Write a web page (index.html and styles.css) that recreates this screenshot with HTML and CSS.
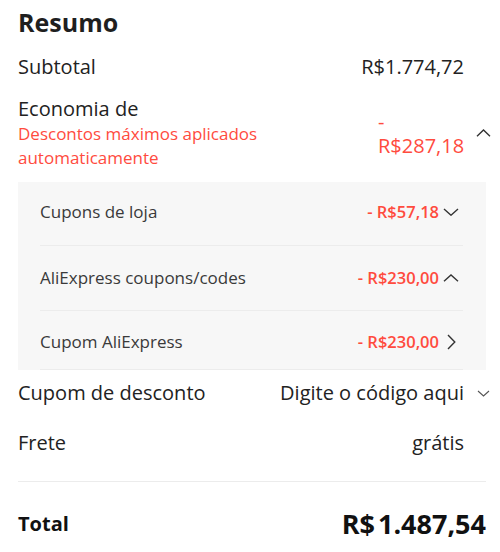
FILE: index.html
```html
<!DOCTYPE html>
<html lang="pt-BR">
<head>
<meta charset="utf-8">
<title>Resumo</title>
<link rel="stylesheet" href="styles.css">
</head>
<body>
<section class="summary">
  <h2 class="title">Resumo</h2>

  <div class="row">
    <span class="label">Subtotal</span>
    <span class="value">R$1.774,72</span>
    <span class="chev-slot"></span>
  </div>

  <div class="row savings">
    <div class="label-block">
      <span class="label">Economia de</span>
      <span class="note">Descontos máximos aplicados automaticamente</span>
    </div>
    <span class="value red savings-value">- R$287,18</span>
    <span class="chev-slot">
      <svg class="chev" width="15" height="8" viewBox="0 0 15 8"><polyline points="1,7.2 7.5,1 14,7.2" fill="none" stroke="#333" stroke-width="1.4"/></svg>
    </span>
  </div>

  <div class="panel">
    <div class="sub-row first">
      <span class="sub-label">Cupons de loja</span>
      <span class="sub-value">- R$57,18</span>
      <span class="sub-chev">
        <svg width="16" height="8" viewBox="0 0 16 8"><polyline points="1,1 8,7.2 15,1" fill="none" stroke="#333" stroke-width="1.4"/></svg>
      </span>
    </div>
    <div class="sub-row">
      <span class="sub-label">AliExpress coupons/codes</span>
      <span class="sub-value">- R$230,00</span>
      <span class="sub-chev">
        <svg width="16" height="8" viewBox="0 0 16 8"><polyline points="1,7.2 8,1 15,7.2" fill="none" stroke="#333" stroke-width="1.4"/></svg>
      </span>
    </div>
    <div class="sub-row last">
      <span class="sub-label">Cupom AliExpress</span>
      <span class="sub-value">- R$230,00</span>
      <span class="sub-chev">
        <svg width="9" height="16" viewBox="0 0 9 16"><polyline points="1,1 7.8,8 1,15" fill="none" stroke="#333" stroke-width="1.4"/></svg>
      </span>
    </div>
  </div>

  <div class="row coupon">
    <span class="label">Cupom de desconto</span>
    <span class="value">Digite o código aqui</span>
    <span class="chev-slot">
      <svg class="chev small" width="13" height="7" viewBox="0 0 13 7"><polyline points="1,1 6.5,6 12,1" fill="none" stroke="#555" stroke-width="1.1"/></svg>
    </span>
  </div>

  <div class="row shipping">
    <span class="label">Frete</span>
    <span class="value">grátis</span>
    <span class="chev-slot"></span>
  </div>

  <div class="total">
    <span class="total-label">Total</span>
    <span class="total-value"><span class="cur">R$</span>1.487,54</span>
  </div>
</section>
</body>
</html>
```

FILE: styles.css
```css
html, body {
  margin: 0;
  padding: 0;
  background: #ffffff;
}

body {
  font-family: "Open Sans", "Noto Sans", "Liberation Sans", sans-serif;
  color: #222222;
}

.summary {
  width: 468px;
  padding: 0 0 0 18px;
}

.title {
  margin: 0 0 4px;
  padding-top: 6px;
  font-size: 25px;
  line-height: 32px;
  font-weight: 700;
  color: #1f1f1f;
}

.row {
  display: flex;
  align-items: center;
  padding: 11px 0;
  font-size: 20px;
  line-height: 28px;
}

.label {
  flex: 1;
  color: #222;
}

.value {
  color: #222;
  text-align: right;
}

.chev-slot {
  width: 22px;
  flex: none;
  display: flex;
  align-items: center;
  overflow: visible;
}

.chev {
  flex: none;
  margin-left: 12px;
  display: block;
}

.chev.small {
  margin-left: 13px;
}

.savings {
  padding: 4px 0 12px;
}

.label-block {
  flex: 1;
  display: flex;
  flex-direction: column;
}

.label-block .label {
  line-height: 26px;
}

.note {
  color: #ff4b3e;
  font-size: 17px;
  line-height: 24px;
  width: 250px;
}

.red {
  color: #ff4b3e;
}

.savings-value {
  width: 86px;
  text-align: left;
  line-height: 24px;
  margin-top: 2px;
}

.panel {
  background: #f7f7f7;
  padding: 0 23px 0 22px;
}

.sub-row {
  display: flex;
  align-items: center;
  padding: 20px 0;
  font-size: 17px;
  line-height: 24px;
  border-bottom: 1px solid #ececec;
}

.sub-row.first {
  padding-top: 18px;
  padding-bottom: 21px;
}

.sub-row.last {
  padding-top: 19px;
  padding-bottom: 15px;
}

.sub-label {
  flex: 1;
  color: #3a3a3a;
}

.sub-value {
  color: #ff4b3e;
  font-weight: 600;
  font-size: 16.5px;
}

.sub-chev {
  width: 24px;
  flex: none;
  display: flex;
  justify-content: center;
  align-items: center;
}

.sub-chev svg {
  display: block;
}

.coupon {
  padding-top: 9px;
}

.shipping {
  padding-bottom: 12px;
}

.total {
  display: flex;
  align-items: center;
  justify-content: space-between;
  border-top: 1px solid #ececec;
  margin-top: 12px;
  padding-top: 24px;
  line-height: 36px;
}

.total-label {
  font-size: 20px;
  font-weight: 700;
  color: #111;
}

.total-value {
  font-size: 27px;
  font-weight: 700;
  color: #111;
}

.cur {
  margin-right: 3px;
}
```
